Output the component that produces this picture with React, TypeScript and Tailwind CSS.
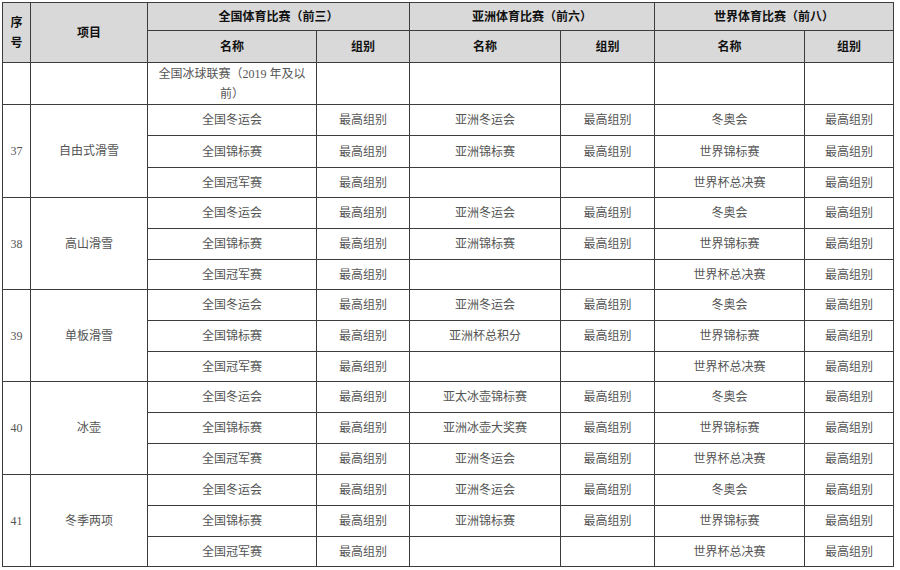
import React from "react";

type Row = string[];
type Group = { no: string; name: string; rows: Row[]; heights: number[] };

const groups: Group[] = [
  {
    no: "37",
    name: "自由式滑雪",
    heights: [31, 32, 30],
    rows: [
      ["全国冬运会", "最高组别", "亚洲冬运会", "最高组别", "冬奥会", "最高组别"],
      ["全国锦标赛", "最高组别", "亚洲锦标赛", "最高组别", "世界锦标赛", "最高组别"],
      ["全国冠军赛", "最高组别", "", "", "世界杯总决赛", "最高组别"],
    ],
  },
  {
    no: "38",
    name: "高山滑雪",
    heights: [31, 31, 30],
    rows: [
      ["全国冬运会", "最高组别", "亚洲冬运会", "最高组别", "冬奥会", "最高组别"],
      ["全国锦标赛", "最高组别", "亚洲锦标赛", "最高组别", "世界锦标赛", "最高组别"],
      ["全国冠军赛", "最高组别", "", "", "世界杯总决赛", "最高组别"],
    ],
  },
  {
    no: "39",
    name: "单板滑雪",
    heights: [31, 31, 30],
    rows: [
      ["全国冬运会", "最高组别", "亚洲冬运会", "最高组别", "冬奥会", "最高组别"],
      ["全国锦标赛", "最高组别", "亚洲杯总积分", "最高组别", "世界锦标赛", "最高组别"],
      ["全国冠军赛", "最高组别", "", "", "世界杯总决赛", "最高组别"],
    ],
  },
  {
    no: "40",
    name: "冰壶",
    heights: [31, 31, 31],
    rows: [
      ["全国冬运会", "最高组别", "亚太冰壶锦标赛", "最高组别", "冬奥会", "最高组别"],
      ["全国锦标赛", "最高组别", "亚洲冰壶大奖赛", "最高组别", "世界锦标赛", "最高组别"],
      ["全国冠军赛", "最高组别", "亚洲冬运会", "最高组别", "世界杯总决赛", "最高组别"],
    ],
  },
  {
    no: "41",
    name: "冬季两项",
    heights: [31, 31, 30],
    rows: [
      ["全国冬运会", "最高组别", "亚洲冬运会", "最高组别", "冬奥会", "最高组别"],
      ["全国锦标赛", "最高组别", "亚洲锦标赛", "最高组别", "世界锦标赛", "最高组别"],
      ["全国冠军赛", "最高组别", "", "", "世界杯总决赛", "最高组别"],
    ],
  },
];

const widths = [28, 117, 169, 93, 151, 94, 150, 89];

const th =
  "border border-[#3c3c3c] bg-[#d9d9d9] text-[12px] font-bold text-[#111] text-center align-middle p-0";
const td =
  "border border-[#3c3c3c] text-[12px] text-[#555] text-center align-middle p-0 leading-[18px]";

export default function App() {
  return (
    <div
      className="w-[900px] h-[570px] bg-white pl-[2px] pt-[2px]"
      style={{ fontFamily: '"Liberation Serif", "Noto Sans CJK SC", serif' }}
    >
      <table className="table-fixed border-collapse w-[891px]">
        <colgroup>
          {widths.map((w, i) => (
            <col key={i} style={{ width: w }} />
          ))}
        </colgroup>
        <thead>
          <tr className="h-[28px]">
            <th rowSpan={2} className={th + " leading-[20px]"}>
              序<br />号
            </th>
            <th rowSpan={2} className={th}>
              项目
            </th>
            <th colSpan={2} className={th}>
              全国体育比赛（前三）
            </th>
            <th colSpan={2} className={th}>
              亚洲体育比赛（前六）
            </th>
            <th colSpan={2} className={th}>
              世界体育比赛（前八）
            </th>
          </tr>
          <tr className="h-[32px]">
            <th className={th}>名称</th>
            <th className={th}>组别</th>
            <th className={th}>名称</th>
            <th className={th}>组别</th>
            <th className={th}>名称</th>
            <th className={th}>组别</th>
          </tr>
        </thead>
        <tbody>
          <tr className="h-[42px]">
            <td className={td}></td>
            <td className={td}></td>
            <td className={td + " px-[10px] leading-[20px]"}>全国冰球联赛（2019 年及以前）</td>
            <td className={td}></td>
            <td className={td}></td>
            <td className={td}></td>
            <td className={td}></td>
            <td className={td}></td>
          </tr>
          {groups.map((g) =>
            g.rows.map((r, ri) => (
              <tr key={g.no + ri} style={{ height: g.heights[ri] }}>
                {ri === 0 && (
                  <>
                    <td rowSpan={3} className={td}>
                      {g.no}
                    </td>
                    <td rowSpan={3} className={td}>
                      {g.name}
                    </td>
                  </>
                )}
                {r.map((c, ci) => (
                  <td key={ci} className={td}>
                    {c}
                  </td>
                ))}
              </tr>
            ))
          )}
        </tbody>
      </table>
    </div>
  );
}
